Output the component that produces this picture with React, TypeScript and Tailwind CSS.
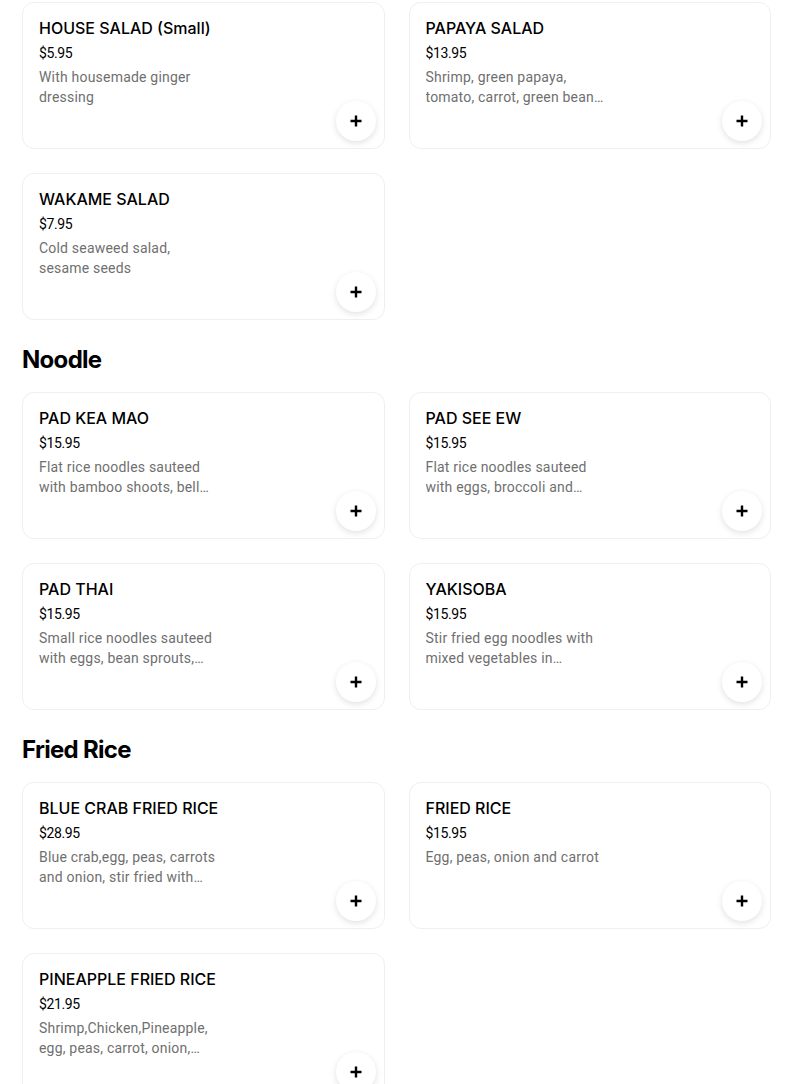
import React from 'react';

type Item = { name: string; price: string; desc: string };

const sections: { title?: string; items: Item[] }[] = [
  {
    items: [
      { name: 'HOUSE SALAD (Small)', price: '$5.95', desc: 'With housemade ginger dressing' },
      { name: 'PAPAYA SALAD', price: '$13.95', desc: 'Shrimp, green papaya, tomato, carrot, green beans, peanuts, lime dressing' },
      { name: 'WAKAME SALAD', price: '$7.95', desc: 'Cold seaweed salad, sesame seeds' },
    ],
  },
  {
    title: 'Noodle',
    items: [
      { name: 'PAD KEA MAO', price: '$15.95', desc: 'Flat rice noodles sauteed with bamboo shoots, bell peppers, basil' },
      { name: 'PAD SEE EW', price: '$15.95', desc: 'Flat rice noodles sauteed with eggs, broccoli and carrots' },
      { name: 'PAD THAI', price: '$15.95', desc: 'Small rice noodles sauteed with eggs, bean sprouts, green onion, peanuts' },
      { name: 'YAKISOBA', price: '$15.95', desc: 'Stir fried egg noodles with mixed vegetables in yakisoba sauce' },
    ],
  },
  {
    title: 'Fried Rice',
    items: [
      { name: 'BLUE CRAB FRIED RICE', price: '$28.95', desc: 'Blue crab,egg, peas, carrots and onion, stir fried with jasmine rice' },
      { name: 'FRIED RICE', price: '$15.95', desc: 'Egg, peas, onion and carrot' },
      { name: 'PINEAPPLE FRIED RICE', price: '$21.95', desc: 'Shrimp,Chicken,Pineapple, egg, peas, carrot, onion, cashew nuts' },
    ],
  },
];

function PlusIcon() {
  return (
    <svg width="14" height="14" viewBox="0 0 14 14" fill="none">
      <path d="M7 1.5v11M1.5 7h11" stroke="#000" strokeWidth="2.4" />
    </svg>
  );
}

function ItemCard({ item }: { item: Item }) {
  return (
    <div className="relative h-[147px] rounded-xl border border-[#efefef] bg-white px-4 pt-[15px]">
      <div className="text-[16px] leading-5 font-medium text-black" style={{ fontFamily: 'Inter, sans-serif' }}>
        {item.name}
      </div>
      <div className="mt-[5px] text-[14px] leading-5 tracking-[-0.4px] text-black">{item.price}</div>
      <div className="mt-1 w-[183px] text-[14px] leading-5 tracking-[0.2px] text-[#6f6f6f] line-clamp-2">{item.desc}</div>
      <button className="absolute right-2 bottom-[7px] flex h-10 w-10 items-center justify-center rounded-full bg-white shadow-[0_2px_6px_rgba(0,0,0,0.12)]">
        <PlusIcon />
      </button>
    </div>
  );
}

export default function App() {
  return (
    <div className="min-h-screen bg-white pl-[22px] pr-[33px] pt-[2px]" style={{ fontFamily: 'Roboto, "Noto Sans", sans-serif' }}>
      {sections.map((s, i) => (
        <div key={i}>
          {s.title && (
            <h2
              className="mt-6 mb-4 text-[24px] leading-8 font-bold tracking-[-0.7px] text-black"
              style={{ fontFamily: 'Inter, sans-serif' }}
            >
              {s.title}
            </h2>
          )}
          <div className="grid grid-cols-2 gap-6">
            {s.items.map((it) => (
              <ItemCard key={it.name} item={it} />
            ))}
          </div>
        </div>
      ))}
    </div>
  );
}
